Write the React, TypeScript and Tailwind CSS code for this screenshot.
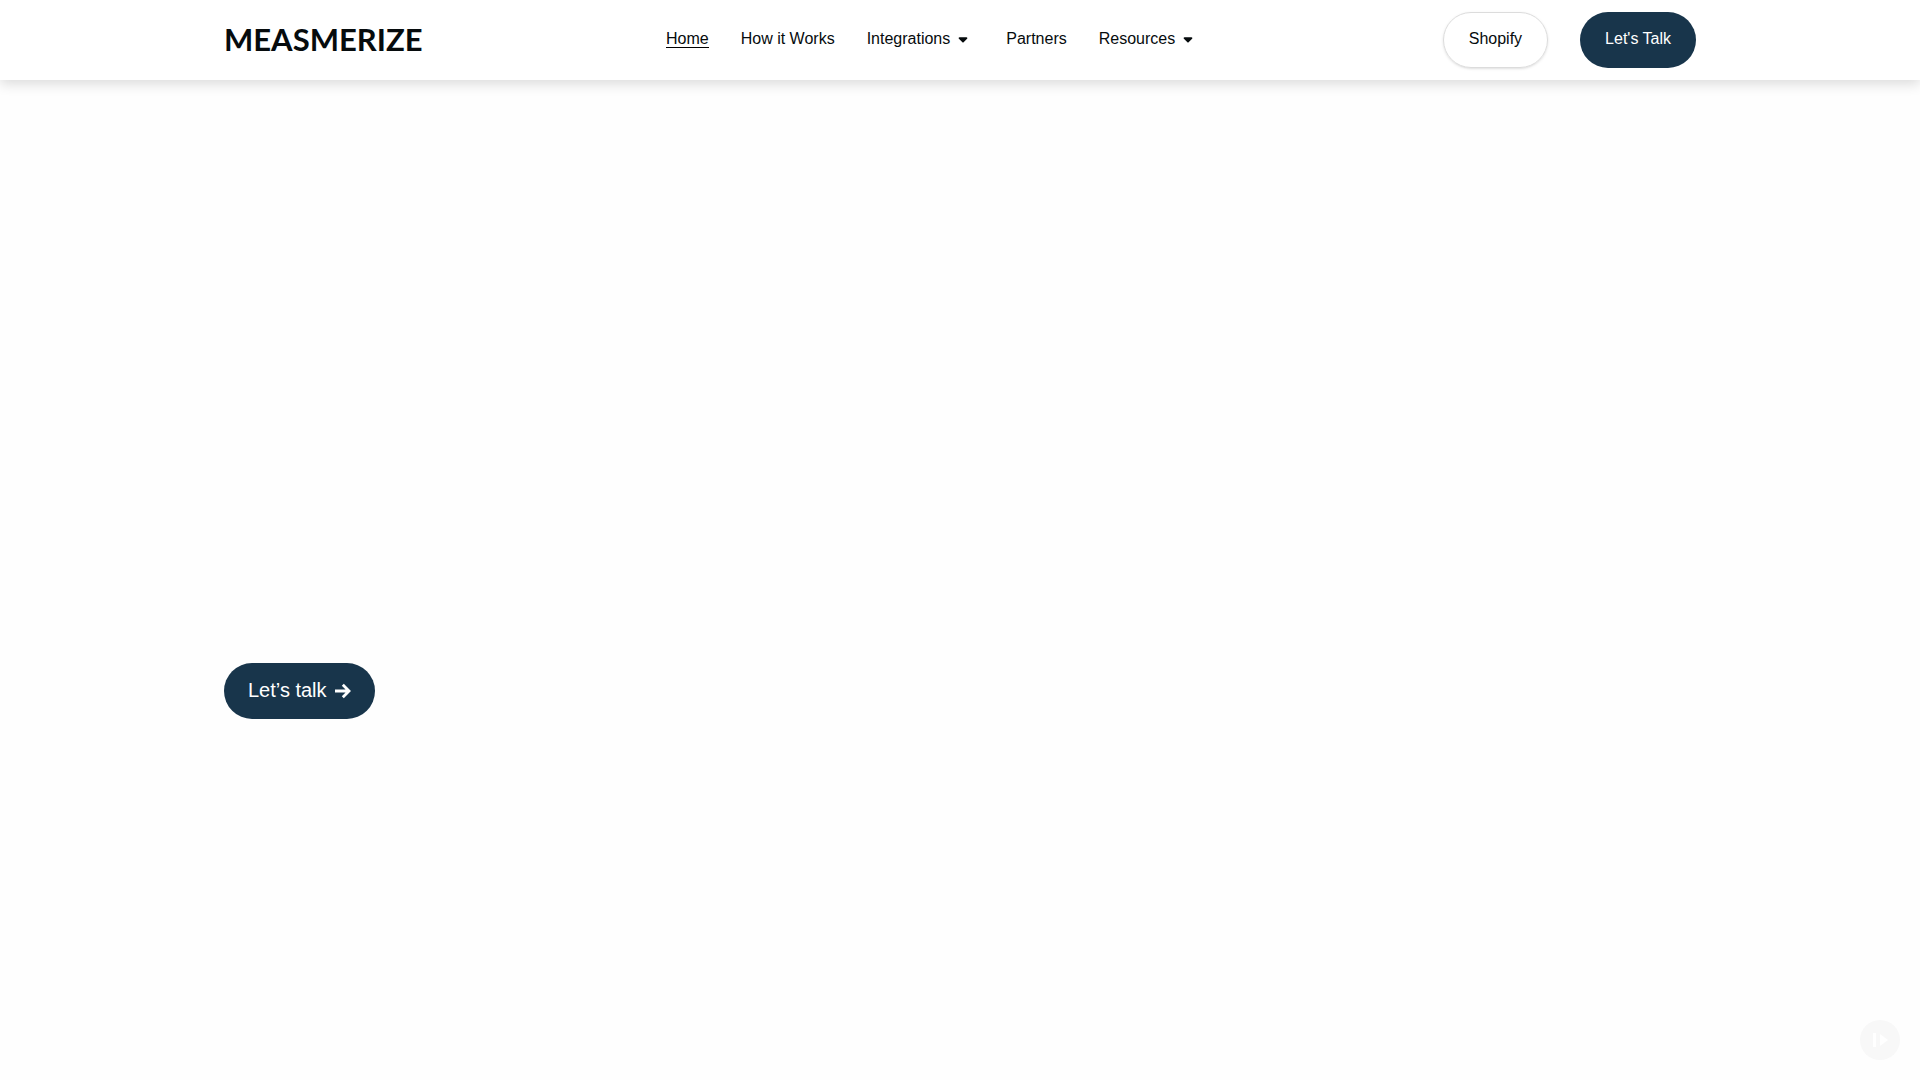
import { FaCaretDown } from "react-icons/fa6";

interface NavItem {
  label: string;
  href?: string;
  active?: boolean;
}

const NAV_ITEMS: NavItem[] = [
  { label: "Home", href: "#home", active: true },
  { label: "How it Works", href: "#how-it-works" },
  { label: "Integrations" },
  { label: "Partners", href: "#partners" },
  { label: "Resources" },
];

function NavEntry({ item }: { item: NavItem }) {
  if (!item.href) {
    return (
      <button type="button" aria-haspopup="menu" className="flex items-center">
        {item.label}
        <FaCaretDown className="ml-1.5 mr-1 size-3.5" />
      </button>
    );
  }
  return (
    <a
      href={item.href}
      aria-current={item.active ? "page" : undefined}
      className={item.active ? "border-b border-black" : "border-b border-transparent"}
    >
      {item.label}
    </a>
  );
}

function ArrowRight() {
  return (
    <svg viewBox="0 0 16 16" className="size-4" fill="none" stroke="currentColor" strokeWidth="2.8" aria-hidden="true">
      <path d="M0 8h13.5M7.8 1.8L14 8l-6.2 6.2" />
    </svg>
  );
}

function Header() {
  return (
    <header className="bg-white shadow-[0_4px_12px_rgba(0,0,0,0.14)]">
      <div className="mx-auto flex h-20 max-w-[1472px] items-center justify-between">
        <a
          href="#home"
          className="pb-0.5 font-['Lato',sans-serif] text-[31px] font-bold leading-8"
        >
          MEASMERIZE
        </a>
        <nav aria-label="Main" className="flex items-center gap-8 pb-0.5 leading-4">
          {NAV_ITEMS.map((item) => (
            <NavEntry key={item.label} item={item} />
          ))}
        </nav>
        <div className="flex items-center gap-8">
          <a
            href="#shopify"
            className="flex h-14 items-center rounded-full border border-[#dcdcdc] px-[25px] pb-0.5 font-medium shadow-sm"
          >
            Shopify
          </a>
          <a
            href="#contact"
            className="flex h-14 items-center rounded-full bg-[#18354b] px-[25px] pb-0.5 text-white"
          >
            Let's Talk
          </a>
        </div>
      </div>
    </header>
  );
}

export default function App() {
  return (
    <div className="flex min-h-screen flex-col bg-[#fefefe] font-['Liberation_Sans',Arial,sans-serif] text-base text-[#060b0d]">
      <Header />
      <main className="mx-auto w-full max-w-[1472px] grow pt-[583px]">
        <a
          href="#contact"
          className="inline-flex h-14 items-center gap-2 rounded-full bg-[#18354b] px-6 text-xl text-white"
        >
          <span className="pb-0.5">Let’s talk</span>
          <ArrowRight />
        </a>
      </main>
      <button
        type="button"
        aria-label="Accessibility options"
        className="fixed bottom-5 right-5 flex size-10 items-center justify-center rounded-full bg-[#f8f8f8]"
      >
        <svg viewBox="0 0 40 40" className="size-10" fill="#ffffff">
          <path d="M13 13h3v14h-3z" />
          <path d="M20 14l8 6-8 6z" />
        </svg>
      </button>
    </div>
  );
}
